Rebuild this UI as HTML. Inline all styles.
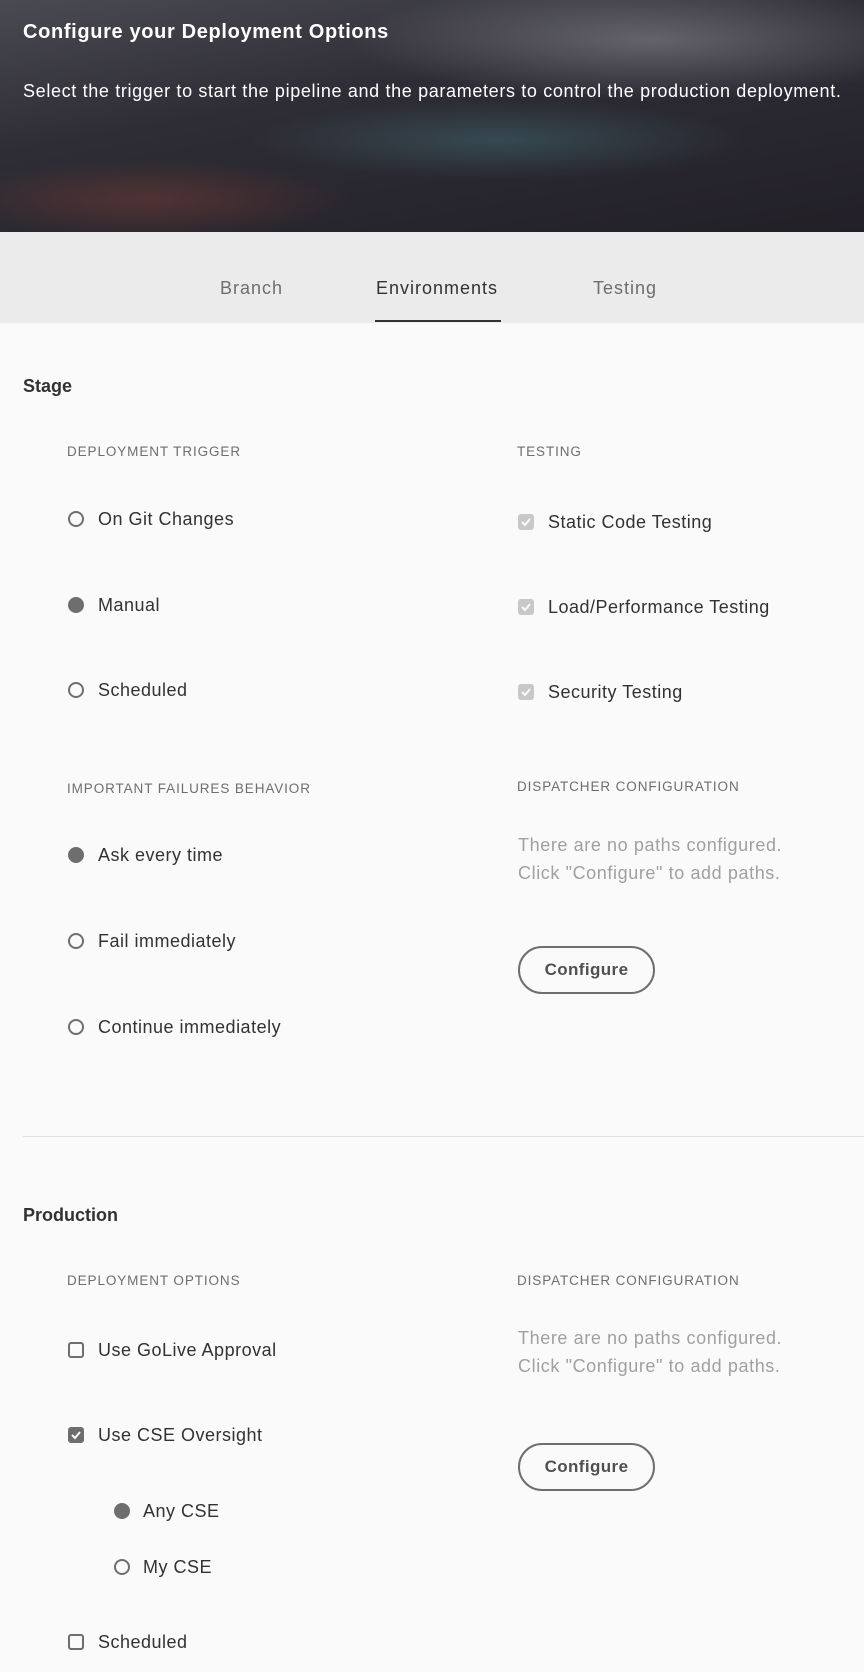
<!DOCTYPE html>
<html><head><meta charset="utf-8"><style>
*{margin:0;padding:0;box-sizing:border-box}
body{width:864px;height:1672px;background:#fafafa;font-family:"Liberation Sans",sans-serif;position:relative;overflow:hidden;color:#323232}
.a{position:absolute;white-space:nowrap;line-height:24px}
.hdr{position:absolute;left:0;top:0;width:864px;height:232px;background:
radial-gradient(ellipse 300px 60px at 650px 40px,rgba(200,200,210,.35),transparent),
radial-gradient(ellipse 200px 40px at 150px 200px,rgba(200,80,60,.25),transparent),
radial-gradient(ellipse 250px 40px at 500px 140px,rgba(90,170,180,.25),transparent),
linear-gradient(170deg,#4a4a52 0%,#2e2d35 40%,#221f27 100%);overflow:hidden}
.tabs{position:absolute;left:0;top:232px;width:864px;height:91px;background:#ebebeb}
.lbl{font-size:13.5px;color:#6e6e6e;letter-spacing:.9px}
.it{font-size:18px;color:#323232;letter-spacing:.5px}
.r{position:absolute;width:16px;height:16px;border-radius:50%;border:2.5px solid #6e6e6e}
.r.on{background:#6e6e6e}
.c{position:absolute;width:16px;height:16px;border-radius:3px;border:2.5px solid #6e6e6e}
.c.on{background:#6e6e6e}
.c.dis{background:#c8c8c8;border-color:#c8c8c8}
.c svg{position:absolute;left:0;top:0}
.g{font-size:18px;color:#a0a0a0;letter-spacing:.6px}
.btn{position:absolute;width:137px;height:48px;border:2.5px solid #6e6e6e;border-radius:24px;font-size:17px;font-weight:bold;color:#505050;text-align:center;line-height:43px;letter-spacing:.4px}
.tab{font-size:18px;letter-spacing:1px}
</style></head><body>
<div class="hdr"></div>
<div class="a" style="left:23px;top:20px;font-size:20px;font-weight:bold;color:#fff;letter-spacing:.65px">Configure your Deployment Options</div>
<div class="a" style="left:23px;top:79px;font-size:18px;color:#fff;letter-spacing:.65px">Select the trigger to start the pipeline and the parameters to control the production deployment.</div>
<div class="tabs"></div>
<div class="a tab" style="left:220px;top:276px;color:#6e6e6e">Branch</div>
<div class="a tab" style="left:376px;top:276px;color:#323232">Environments</div>
<div class="a tab" style="left:593px;top:276px;color:#6e6e6e">Testing</div>
<div style="position:absolute;left:375px;top:320px;width:126px;height:2px;background:#323232"></div>

<div class="a" style="left:23px;top:374px;font-size:18px;font-weight:bold">Stage</div>
<div class="a lbl" style="left:67px;top:440px">DEPLOYMENT TRIGGER</div>
<div class="a lbl" style="left:517px;top:440px">TESTING</div>

<div class="r" style="left:68px;top:511px"></div><div class="a it" style="left:98px;top:507px">On Git Changes</div>
<div class="r on" style="left:68px;top:597px"></div><div class="a it" style="left:98px;top:593px">Manual</div>
<div class="r" style="left:68px;top:682px"></div><div class="a it" style="left:98px;top:678px">Scheduled</div>

<div class="c dis" style="left:518px;top:514px"><svg width="12" height="12" viewBox="0 0 12 12"><path d="M2 6l3 3 5-6" stroke="#fafafa" stroke-width="2" fill="none"/></svg></div><div class="a it" style="left:548px;top:510px">Static Code Testing</div>
<div class="c dis" style="left:518px;top:599px"><svg width="12" height="12" viewBox="0 0 12 12"><path d="M2 6l3 3 5-6" stroke="#fafafa" stroke-width="2" fill="none"/></svg></div><div class="a it" style="left:548px;top:595px">Load/Performance Testing</div>
<div class="c dis" style="left:518px;top:684px"><svg width="12" height="12" viewBox="0 0 12 12"><path d="M2 6l3 3 5-6" stroke="#fafafa" stroke-width="2" fill="none"/></svg></div><div class="a it" style="left:548px;top:680px">Security Testing</div>

<div class="a lbl" style="left:67px;top:777px">IMPORTANT FAILURES BEHAVIOR</div>
<div class="a lbl" style="left:517px;top:775px">DISPATCHER CONFIGURATION</div>
<div class="r on" style="left:68px;top:847px"></div><div class="a it" style="left:98px;top:843px">Ask every time</div>
<div class="r" style="left:68px;top:933px"></div><div class="a it" style="left:98px;top:929px">Fail immediately</div>
<div class="r" style="left:68px;top:1019px"></div><div class="a it" style="left:98px;top:1015px">Continue immediately</div>
<div class="a g" style="left:518px;top:833px">There are no paths configured.</div>
<div class="a g" style="left:518px;top:861px">Click "Configure" to add paths.</div>
<div class="btn" style="left:518px;top:946px">Configure</div>

<div style="position:absolute;left:23px;top:1136px;width:841px;height:1px;background:#e1e1e1"></div>

<div class="a" style="left:23px;top:1203px;font-size:18px;font-weight:bold">Production</div>
<div class="a lbl" style="left:67px;top:1269px">DEPLOYMENT OPTIONS</div>
<div class="a lbl" style="left:517px;top:1269px">DISPATCHER CONFIGURATION</div>
<div class="c" style="left:68px;top:1342px"></div><div class="a it" style="left:98px;top:1338px">Use GoLive Approval</div>
<div class="c on" style="left:68px;top:1427px"><svg width="12" height="12" viewBox="0 0 12 12"><path d="M2 6l3 3 5-6" stroke="#fafafa" stroke-width="2" fill="none"/></svg></div><div class="a it" style="left:98px;top:1423px">Use CSE Oversight</div>
<div class="r on" style="left:114px;top:1503px"></div><div class="a it" style="left:143px;top:1499px">Any CSE</div>
<div class="r" style="left:114px;top:1559px"></div><div class="a it" style="left:143px;top:1555px">My CSE</div>
<div class="c" style="left:68px;top:1634px"></div><div class="a it" style="left:98px;top:1630px">Scheduled</div>
<div class="a g" style="left:518px;top:1326px">There are no paths configured.</div>
<div class="a g" style="left:518px;top:1354px">Click "Configure" to add paths.</div>
<div class="btn" style="left:518px;top:1443px">Configure</div>
</body></html>
